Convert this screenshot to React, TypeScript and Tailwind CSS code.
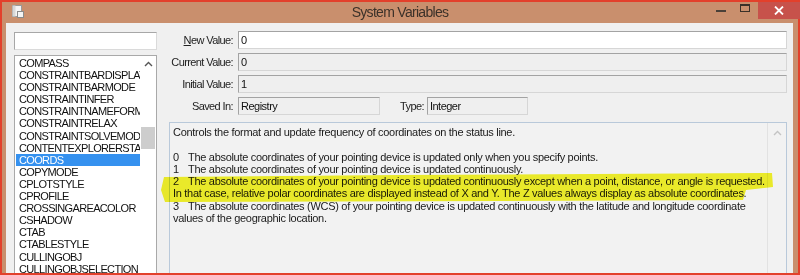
import React from "react";

const items = [
  "COMPASS",
  "CONSTRAINTBARDISPLAY",
  "CONSTRAINTBARMODE",
  "CONSTRAINTINFER",
  "CONSTRAINTNAMEFORMAT",
  "CONSTRAINTRELAX",
  "CONSTRAINTSOLVEMODE",
  "CONTENTEXPLORERSTATE",
  "COORDS",
  "COPYMODE",
  "CPLOTSTYLE",
  "CPROFILE",
  "CROSSINGAREACOLOR",
  "CSHADOW",
  "CTAB",
  "CTABLESTYLE",
  "CULLINGOBJ",
  "CULLINGOBJSELECTION",
];

const font = { fontFamily: '"Liberation Sans", Arial, sans-serif' };

function Field({ value, white }: { value: string; white?: boolean }) {
  return (
    <div
      className={`h-[18px] border border-[#a3a3a3] border-b-[#d6d6d6] border-r-[#d6d6d6] ${
        white ? "bg-white" : "bg-[#efefef]"
      } flex items-center pl-[2px] text-[11px] tracking-[-0.5px] text-[#111]`}
    >
      {value}
    </div>
  );
}

function Label({ children }: { children: React.ReactNode }) {
  return (
    <div className="h-[18px] flex items-center justify-end text-[11px] tracking-[-0.6px] text-[#222]">
      {children}
    </div>
  );
}

export default function App() {
  return (
    <div className="relative w-[800px] h-[275px] overflow-hidden bg-white" style={font}>
      <div className="w-[800px] h-[275px] border-2 border-[#e3402b] bg-[#c98f6d] flex flex-col">
        {/* Title bar */}
        <div className="h-[21px] flex items-start">
          <div className="w-[340px] pl-[10px] pt-[3px]">
            <svg width="12" height="13" viewBox="0 0 12 13">
              <rect x="0.5" y="0.5" width="9" height="11" fill="#f4f4f4" stroke="#9a9a9a" />
              <rect x="0.5" y="0.5" width="3" height="11" fill="#d8d8d8" />
              <rect x="5.5" y="6.5" width="6" height="6" fill="#f4f4f4" stroke="#8a8a8a" />
            </svg>
          </div>
          <div className="flex-1 flex justify-center pt-[2px]">
            <span className="text-[14px] tracking-[-0.7px] text-[#3b3129] leading-[17px]">
              System Variables
            </span>
          </div>
          <div className="w-[340px] flex justify-end items-start">
            <div className="w-[10px] h-[2px] bg-[#4a4038] mt-[8px] mr-[14px]" />
            <div className="w-[10px] h-[8px] border border-[#3a3028] border-t-2 mt-[2px] mr-[8px]" />
            <div className="w-[42px] h-[17px] bg-[#c7524b] flex items-center justify-center -mr-[2px]">
              <svg width="10" height="9" viewBox="0 0 10 9">
                <path d="M1 0.5 L9 8.5 M9 0.5 L1 8.5" stroke="#fff" strokeWidth="1.8" />
              </svg>
            </div>
          </div>
        </div>

        {/* Body */}
        <div className="flex-1 min-h-0 flex pl-[4px] pr-[5px]">
          <div className="flex-1 bg-[#f0f0f0] flex min-h-0">
            {/* Left column */}
            <div className="ml-[8px] w-[143px] pt-[9px] flex flex-col">
              <div className="h-[18px] bg-white border border-[#a7a7a7] border-b-[#dadada] border-r-[#dadada]" />
              <div className="mt-[5px] flex-1 bg-white border border-[#a9a9a9] border-b-0 flex overflow-hidden">
                <div className="flex-1 min-w-0 pt-[1px] pl-[1px] overflow-hidden">
                  {items.map((it) => (
                    <div
                      key={it}
                      className={`h-[12.1px] leading-[12px] pl-[3px] whitespace-nowrap text-[11px] tracking-[-0.65px] ${
                        it === "COORDS" ? "bg-[#3591ef] text-white" : "text-[#111]"
                      }`}
                    >
                      {it}
                    </div>
                  ))}
                </div>
                <div className="w-[16px] flex flex-col items-center">
                  <svg width="9" height="6" viewBox="0 0 9 6" className="mt-[5px]">
                    <path d="M1 5 L4.5 1.5 L8 5" fill="none" stroke="#555" strokeWidth="1.4" />
                  </svg>
                  <div className="w-[14px] h-[22px] bg-[#cdcdcd] mt-[60px]" />
                </div>
              </div>
            </div>

            {/* Right column */}
            <div className="flex-1 pt-[8px] pr-[6px] flex flex-col min-h-0">
              <div className="grid grid-cols-[76px_1fr] gap-x-[5px] gap-y-[4px]">
                <Label>
                  <span>
                    <span className="underline">N</span>ew Value:
                  </span>
                </Label>
                <Field value="0" white />
                <Label>Current Value:</Label>
                <Field value="0" />
                <Label>Initial Value:</Label>
                <Field value="1" />
                <Label>Saved In:</Label>
                <div className="flex items-center">
                  <div className="w-[142px]">
                    <Field value="Registry" />
                  </div>
                  <div className="ml-[20px] mr-[3px] text-[11px] tracking-[-0.6px] text-[#222]">Type:</div>
                  <div className="w-[101px]">
                    <Field value="Integer" />
                  </div>
                </div>
              </div>

              <div className="mt-[7px] ml-[12px] flex-1 min-h-0 border border-[#b9c9da] border-b-0 bg-[#f2f2f2] flex">
                <div className="flex-1 pl-[3px] pt-[3px] text-[11px] leading-[12.3px] tracking-[-0.3px] text-[#1a1a1a] whitespace-nowrap">
                  <div>Controls the format and update frequency of coordinates on the status line.</div>
                  <div>&nbsp;</div>
                  <div className="flex">
                    <span className="w-[15px]">0</span>
                    <span>The absolute coordinates of your pointing device is updated only when you specify points.</span>
                  </div>
                  <div className="flex">
                    <span className="w-[15px]">1</span>
                    <span>The absolute coordinates of your pointing device is updated continuously.</span>
                  </div>
                  <div className="flex">
                    <span className="w-[15px]">2</span>
                    <span>
                      The absolute coordinates of your pointing device is updated continuously except when a point, distance, or angle is requested.
                    </span>
                  </div>
                  <div>
                    In that case, relative polar coordinates are displayed instead of X and Y. The Z values always display as absolute coordinates.
                  </div>
                  <div className="flex">
                    <span className="w-[15px]">3</span>
                    <span>
                      The absolute coordinates (WCS) of your pointing device is updated continuously with the latitude and longitude coordinate
                    </span>
                  </div>
                  <div>values of the geographic location.</div>
                </div>
                <div className="w-[19px] border-l border-[#e2e2e2] flex flex-col items-center">
                  <svg width="9" height="6" viewBox="0 0 9 6" className="mt-[7px]">
                    <path d="M1 5 L4.5 1.5 L8 5" fill="none" stroke="#c4c4c4" strokeWidth="1.4" />
                  </svg>
                </div>
              </div>
            </div>
          </div>
        </div>
      </div>

      {/* Yellow marker highlight annotation */}
      <svg
        className="absolute left-0 top-0 pointer-events-none mix-blend-multiply"
        width="800"
        height="275"
        viewBox="0 0 800 275"
      >
        <path
          d="M164 177 L400 175 L772 173 L773 187 L746 190 L743 200 L500 201 L165 202 L161 190 Z"
          fill="#f6f62c"
        />
      </svg>
    </div>
  );
}
